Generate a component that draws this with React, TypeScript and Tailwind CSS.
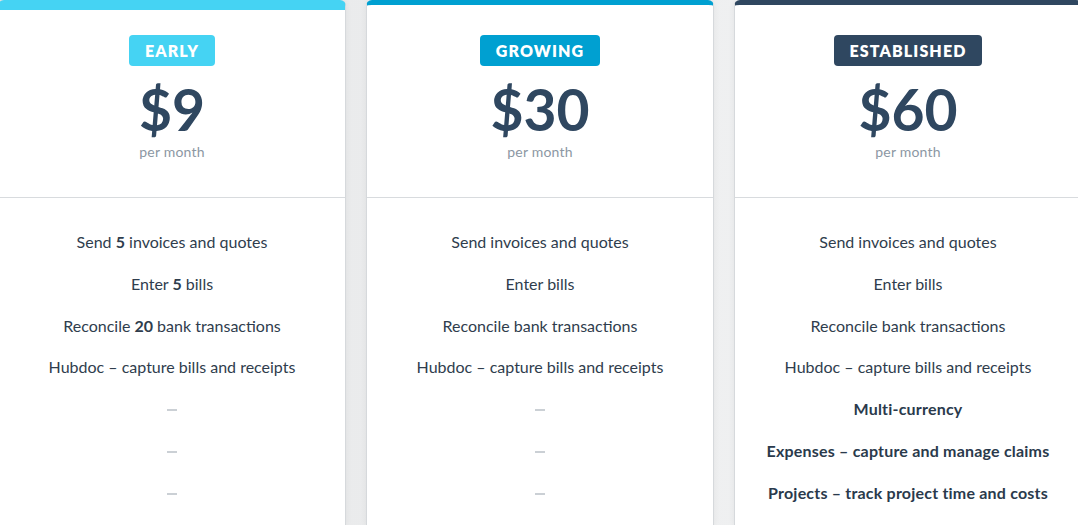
import React from 'react'

type Feature = { text: React.ReactNode; bold?: boolean } | null

type Plan = {
  name: string
  price: string
  badge: string
  bar: string
  head: string
  features: Feature[]
}

const plans: Plan[] = [
  {
    name: 'EARLY',
    price: '$9',
    badge: 'bg-[#45d3f3]',
    bar: 'border-t-[10px] border-t-[#45d3f3]',
    head: 'h-[188px] pt-[25px]',
    features: [
      { text: <>Send <b className="font-bold">5</b> invoices and quotes</> },
      { text: <>Enter <b className="font-bold">5</b> bills</> },
      { text: <>Reconcile <b className="font-bold">20</b> bank transactions</> },
      { text: 'Hubdoc – capture bills and receipts' },
      null,
      null,
      null,
    ],
  },
  {
    name: 'GROWING',
    price: '$30',
    badge: 'bg-[#00a0d1]',
    bar: 'border-t-[5px] border-t-[#00a0d1]',
    head: 'h-[193px] pt-[30px]',
    features: [
      { text: 'Send invoices and quotes' },
      { text: 'Enter bills' },
      { text: 'Reconcile bank transactions' },
      { text: 'Hubdoc – capture bills and receipts' },
      null,
      null,
      null,
    ],
  },
  {
    name: 'ESTABLISHED',
    price: '$60',
    badge: 'bg-[#2f4760]',
    bar: 'border-t-[5px] border-t-[#2f4760]',
    head: 'h-[193px] pt-[30px]',
    features: [
      { text: 'Send invoices and quotes' },
      { text: 'Enter bills' },
      { text: 'Reconcile bank transactions' },
      { text: 'Hubdoc – capture bills and receipts' },
      { text: 'Multi-currency', bold: true },
      { text: 'Expenses – capture and manage claims', bold: true },
      { text: 'Projects – track project time and costs', bold: true },
    ],
  },
]

function PlanCard({ plan }: { plan: Plan }) {
  return (
    <div className={`w-[348px] shrink-0 bg-white border border-[#d6d9dc] rounded-t-[6px] shadow-[0_0_6px_rgba(0,0,0,0.06)] ${plan.bar}`}>
      <div className={`${plan.head} flex flex-col items-center border-b border-[#d8dbde]`}>
        <span className={`${plan.badge} text-white font-extrabold text-[16px] tracking-[1.1px] leading-[31px] h-[31px] px-4 rounded-[4px]`}>
          {plan.name}
        </span>
        <div className="mt-[16px] text-[#2f4760] font-bold text-[57px] leading-[55px]">
          {plan.price}
        </div>
        <div className="mt-[6px] text-[#8c97a3] text-[14px] leading-[18px] tracking-[0.2px]">per month</div>
      </div>
      <ul className="pt-[34px] flex flex-col items-center">
        {plan.features.map((f, i) => (
          <li key={i} className="h-[41.8px] flex items-start justify-center text-[16px] leading-[20px] text-[#2f3d4d]">
            {f ? (
              <span className={f.bold ? 'font-bold text-[#2a3a4c] tracking-[0.2px]' : ''}>{f.text}</span>
            ) : (
              <span className="mt-[10px] block w-[10px] h-[2px] bg-[#cbd0d5]" />
            )}
          </li>
        ))}
      </ul>
    </div>
  )
}

export default function App() {
  return (
    <main
      className="w-[1078px] h-[525px] overflow-hidden bg-gradient-to-r from-[#e6e7e8] to-[#f3f4f5]"
      style={{ fontFamily: 'Lato, "Open Sans", sans-serif' }}
    >
      <div className="flex gap-[20px] -ml-[2px]">
        {plans.map((p) => (
          <PlanCard key={p.name} plan={p} />
        ))}
      </div>
    </main>
  )
}
